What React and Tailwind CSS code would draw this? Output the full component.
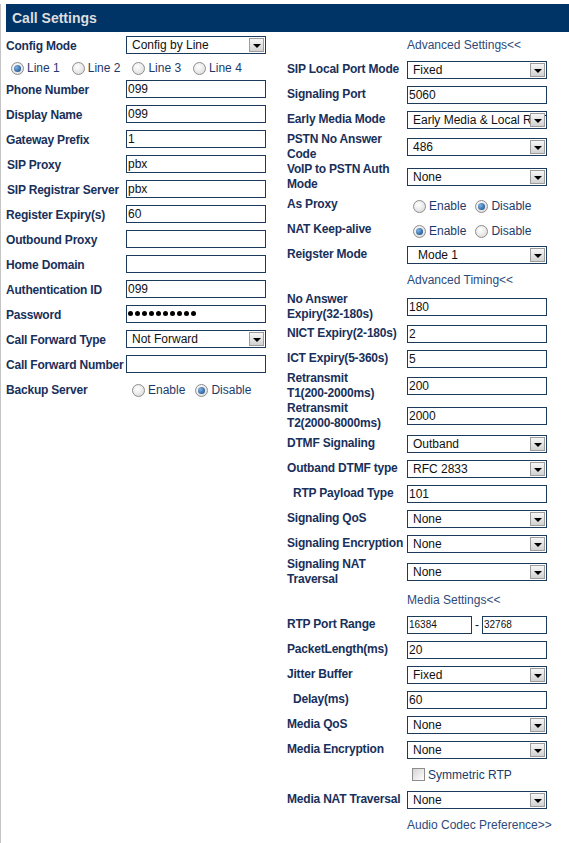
import React from "react";

const labelCls =
  "text-[12px] tracking-[-0.2px] font-bold text-[#18305a] leading-[15px] whitespace-nowrap";
const plainCls = "text-[12px] text-[#1e3a6a] whitespace-nowrap";
const linkCls = "text-[12px] text-[#2d4a7c] whitespace-nowrap";

function TextField({ value = "", w = "w-[140px]", small = false }) {
  return (
    <div
      className={`${w} h-[18px] border border-[#1b3a5c] bg-white pl-[1px] flex items-center overflow-hidden whitespace-nowrap text-[#111] ${
        small ? "text-[10px]" : "text-[12px]"
      }`}
    >
      {value}
    </div>
  );
}

function PasswordField() {
  return (
    <div className="w-[140px] h-[18px] border border-[#1b3a5c] bg-white pl-[1px] flex items-center gap-[2px]">
      {Array.from({ length: 10 }).map((_, i) => (
        <span key={i} className="w-[5px] h-[5px] rounded-full bg-black" />
      ))}
    </div>
  );
}

function Select({ value, pad = "pl-[5px]" }) {
  return (
    <div
      className={`relative w-[140px] h-[18px] border border-[#1b3a5c] bg-white ${pad} flex items-center overflow-hidden whitespace-nowrap text-[12px] text-[#111]`}
    >
      {value}
      {/* dropdown button */}
      <span className="absolute right-[1px] top-[1px] bottom-[1px] w-[15px] border border-[#9c9c9c] bg-[linear-gradient(#f6f6f6,#d2d2d2)] flex items-center justify-center">
        <span className="mt-[2px] w-0 h-0 border-x-[4px] border-x-transparent border-t-[4px] border-t-black" />
      </span>
    </div>
  );
}

function Radio({ checked, label }) {
  return (
    <span className="inline-flex items-center gap-[3px]">
      <span className="w-[13px] h-[13px] rounded-full border border-[#8d8d8d] bg-[radial-gradient(circle_at_40%_35%,#ffffff,#d6d6d6)] flex items-center justify-center">
        {checked && (
          <span className="w-[7px] h-[7px] rounded-full bg-[radial-gradient(circle_at_35%_35%,#7fb4e6,#0c3f7d)]" />
        )}
      </span>
      <span className={plainCls}>{label}</span>
    </span>
  );
}

function LeftRow({ label, children, indent = false }) {
  return (
    <div className="h-[25px] flex items-center">
      <div className={`w-[120px] ${indent ? "pl-[1px]" : ""}`}>
        <span className={labelCls}>{label}</span>
      </div>
      <div className="flex items-center">{children}</div>
    </div>
  );
}

function RightRow({ h = "h-[25px]", label, children, indent = false }) {
  return (
    <div className={`${h} flex items-center`}>
      <div className={`w-[120px] ${indent ? "pl-[6px]" : ""}`}>
        {label && <div className={labelCls}>{label}</div>}
      </div>
      <div className="flex items-center">{children}</div>
    </div>
  );
}

export default function App() {
  return (
    <div className="w-[569px] h-[843px] bg-white overflow-hidden font-['Liberation_Sans',Arial,sans-serif]">
      <div className="mt-[4px] h-[839px] border-l border-[#c4c4c4]">
        <div className="ml-[5px] h-[28px] bg-[#003366] pl-[6px] flex items-center">
          <span className="text-[14px] font-bold text-[#dedede]">
            Call Settings
          </span>
        </div>

        <div className="flex">
          {/* line settings */}
          <div className="w-[286px] pl-[5px]">
            <LeftRow label="Config Mode">
              <Select value="Config by Line" />
            </LeftRow>
            <div className="h-[19px] flex items-center pl-[5px] pt-[3px] gap-[12px]">
              <Radio checked label="Line 1" />
              <Radio label="Line 2" />
              <Radio label="Line 3" />
              <Radio label="Line 4" />
            </div>
            <LeftRow label="Phone Number">
              <TextField value="099" />
            </LeftRow>
            <LeftRow label="Display Name">
              <TextField value="099" />
            </LeftRow>
            <LeftRow label="Gateway Prefix">
              <TextField value="1" />
            </LeftRow>
            <LeftRow label="SIP Proxy" indent>
              <TextField value="pbx" />
            </LeftRow>
            <LeftRow label="SIP Registrar Server" indent>
              <TextField value="pbx" />
            </LeftRow>
            <LeftRow label="Register Expiry(s)">
              <TextField value="60" />
            </LeftRow>
            <LeftRow label="Outbound Proxy">
              <TextField />
            </LeftRow>
            <LeftRow label="Home Domain">
              <TextField />
            </LeftRow>
            <LeftRow label="Authentication ID">
              <TextField value="099" />
            </LeftRow>
            <LeftRow label="Password">
              <PasswordField />
            </LeftRow>
            <LeftRow label="Call Forward Type">
              <Select value="Not Forward" />
            </LeftRow>
            <LeftRow label="Call Forward Number">
              <TextField />
            </LeftRow>
            <LeftRow label="Backup Server">
              <div className="flex items-center gap-[10px] pl-[6px] pt-[3px]">
                <Radio label="Enable" />
                <Radio checked label="Disable" />
              </div>
            </LeftRow>
          </div>

          {/* advanced settings */}
          <div className="w-[282px]">
            <RightRow>
              <span className={linkCls}>Advanced Settings&lt;&lt;</span>
            </RightRow>
            <RightRow label="SIP Local Port Mode">
              <Select value="Fixed" />
            </RightRow>
            <RightRow label="Signaling Port">
              <TextField value="5060" />
            </RightRow>
            <RightRow label="Early Media Mode">
              <Select value="Early Media & Local RBT" />
            </RightRow>
            <RightRow
              h="h-[30px]"
              label={
                <>
                  PSTN No Answer
                  <br />
                  Code
                </>
              }
            >
              <Select value="486" />
            </RightRow>
            <RightRow
              h="h-[30px]"
              label={
                <>
                  VoIP to PSTN Auth
                  <br />
                  Mode
                </>
              }
            >
              <Select value="None" />
            </RightRow>
            <RightRow label="As Proxy">
              <div className="flex items-center gap-[9px] pl-[6px] pt-[3px]">
                <Radio label="Enable" />
                <Radio checked label="Disable" />
              </div>
            </RightRow>
            <RightRow label="NAT Keep-alive">
              <div className="flex items-center gap-[9px] pl-[6px] pt-[3px]">
                <Radio checked label="Enable" />
                <Radio label="Disable" />
              </div>
            </RightRow>
            <RightRow label="Reigster Mode">
              <Select value="Mode 1" pad="pl-[10px]" />
            </RightRow>
            <RightRow>
              <span className={linkCls}>Advanced Timing&lt;&lt;</span>
            </RightRow>
            <RightRow
              h="h-[29px]"
              label={
                <>
                  No Answer
                  <br />
                  Expiry(32-180s)
                </>
              }
            >
              <TextField value="180" />
            </RightRow>
            <RightRow label="NICT Expiry(2-180s)">
              <TextField value="2" />
            </RightRow>
            <RightRow label="ICT Expiry(5-360s)">
              <TextField value="5" />
            </RightRow>
            <RightRow
              h="h-[30px]"
              label={
                <>
                  Retransmit
                  <br />
                  T1(200-2000ms)
                </>
              }
            >
              <TextField value="200" />
            </RightRow>
            <RightRow
              h="h-[30px]"
              label={
                <>
                  Retransmit
                  <br />
                  T2(2000-8000ms)
                </>
              }
            >
              <TextField value="2000" />
            </RightRow>
            <RightRow label="DTMF Signaling">
              <Select value="Outband" />
            </RightRow>
            <RightRow label="Outband DTMF type">
              <Select value="RFC 2833" />
            </RightRow>
            <RightRow label="RTP Payload Type" indent>
              <TextField value="101" />
            </RightRow>
            <RightRow label="Signaling QoS">
              <Select value="None" />
            </RightRow>
            <RightRow label="Signaling Encryption">
              <Select value="None" />
            </RightRow>
            <RightRow
              h="h-[32px]"
              label={
                <>
                  Signaling NAT
                  <br />
                  Traversal
                </>
              }
            >
              <Select value="None" />
            </RightRow>
            <RightRow h="h-[24px]">
              <span className={linkCls}>Media Settings&lt;&lt;</span>
            </RightRow>
            <RightRow label="RTP Port Range">
              <div className="flex items-center">
                <TextField value="16384" w="w-[65px]" small />
                <span className="w-[10px] text-center text-[12px] text-[#111]">
                  -
                </span>
                <TextField value="32768" w="w-[65px]" small />
              </div>
            </RightRow>
            <RightRow label="PacketLength(ms)">
              <TextField value="20" />
            </RightRow>
            <RightRow label="Jitter Buffer">
              <Select value="Fixed" />
            </RightRow>
            <RightRow label="Delay(ms)" indent>
              <TextField value="60" />
            </RightRow>
            <RightRow label="Media QoS">
              <Select value="None" />
            </RightRow>
            <RightRow label="Media Encryption">
              <Select value="None" />
            </RightRow>
            <RightRow>
              <span className="inline-flex items-center gap-[3px] pl-[5px]">
                <span className="w-[13px] h-[13px] border border-[#8d8d8d] bg-[linear-gradient(135deg,#d4d4d4,#ffffff)]" />
                <span className={plainCls}>Symmetric RTP</span>
              </span>
            </RightRow>
            <RightRow label="Media NAT Traversal">
              <Select value="None" />
            </RightRow>
            <RightRow>
              <span className={linkCls}>Audio Codec Preference&gt;&gt;</span>
            </RightRow>
          </div>
        </div>
      </div>
    </div>
  );
}
